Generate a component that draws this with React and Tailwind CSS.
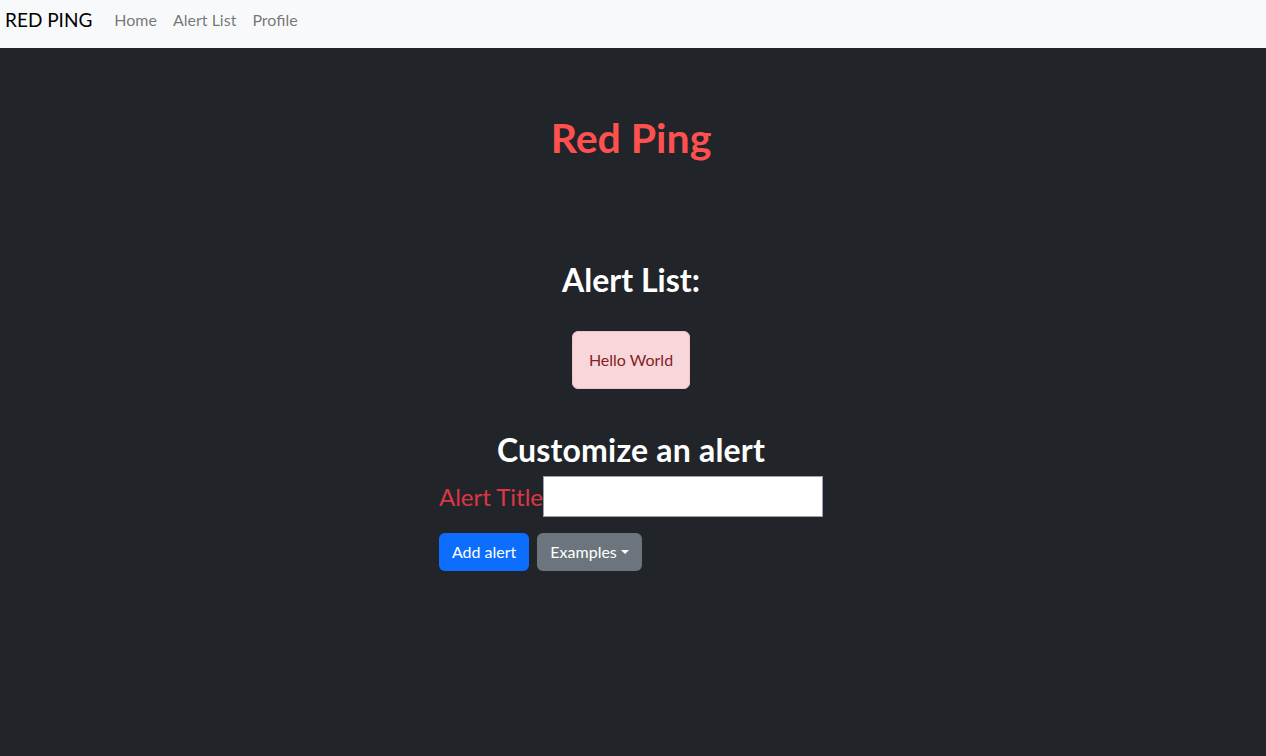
import React from "react";

const links = ["Home", "Alert List", "Profile"];

export default function App() {
  return (
    <div className="min-h-screen bg-[#212529] font-['Lato',sans-serif]">
      <nav className="h-12 bg-[#f8f9fa] flex items-start">
        <span className="pl-[5px] pr-[14px] pt-[5px] text-[19px] leading-[30px] text-black">RED PING</span>
        <div className="flex items-center pt-2">
          {links.map((l) => (
            <a key={l} href="#" className="px-2 text-base leading-6 text-black/55">{l}</a>
          ))}
        </div>
      </nav>

      <main className="flex flex-col items-center pt-[66px] pr-[4px]">
        <h1 className="text-[41px] leading-[48px] font-bold text-[#ff5050]">Red Ping</h1>

        <h2 className="mt-[99px] text-[32px] leading-[38px] font-bold text-white">Alert List:</h2>

        <div className="mt-[32px] px-4 py-4 bg-[#f8d7da] border border-[#f5c2c7] rounded-md text-[#842029] text-[16px] leading-6">
          Hello World
        </div>

        <h2 className="mt-[42px] text-[32px] leading-[38px] font-bold text-white tracking-[0.2px]">Customize an alert</h2>

        <div className="mt-[7px] flex flex-col items-start">
          <div className="flex items-center">
            <label className="text-[24px] text-[#dc3545]">Alert Title</label>
            <input type="text" className="w-[280px] h-[41px] bg-white border border-gray-400" />
          </div>
          <div className="mt-[16px] flex gap-2">
            <button className="h-[38px] px-[13px] rounded-md bg-[#0d6efd] text-white text-base">Add alert</button>
            <button className="h-[38px] px-[13px] rounded-md bg-[#6c757d] text-white text-base flex items-center">
              Examples
              <span className="ml-1 w-0 h-0 border-l-[4px] border-r-[4px] border-t-[4px] border-l-transparent border-r-transparent border-t-white"></span>
            </button>
          </div>
        </div>
      </main>
    </div>
  );
}
